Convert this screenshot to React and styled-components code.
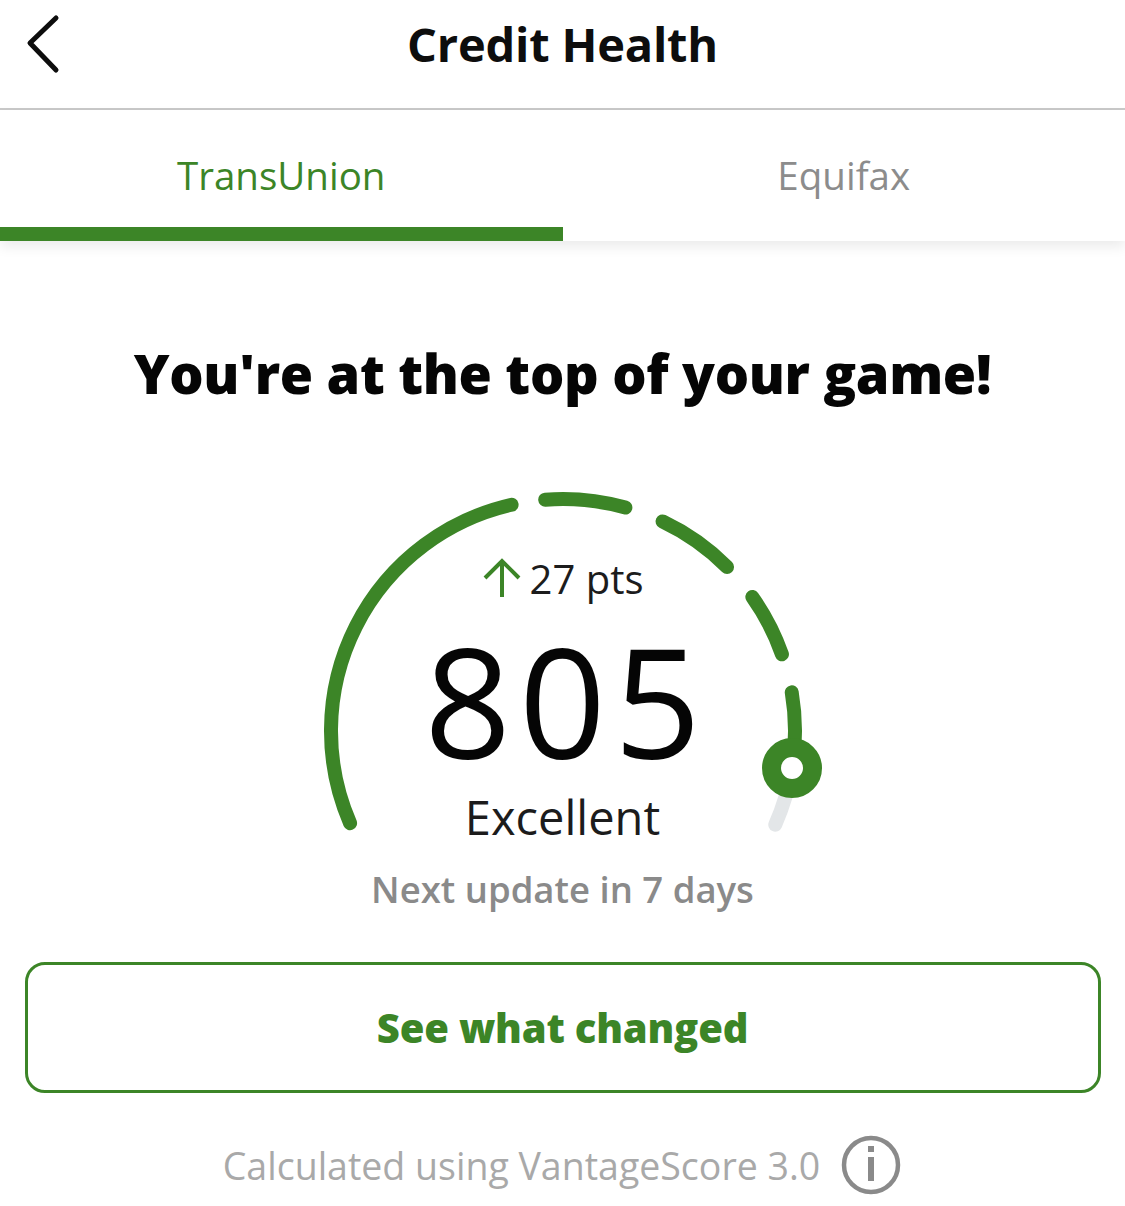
import React from "react";
import styled, { createGlobalStyle } from "styled-components";

const GREEN = "#3c8527";

const Global = createGlobalStyle`
  html, body { margin: 0; padding: 0; background: #ffffff; }
  body { font-family: "Open Sans", "Noto Sans", sans-serif; color: #111; }
  * { box-sizing: border-box; }
`;

const Page = styled.div`
  width: 1125px;
  min-height: 1206px;
  display: flex;
  flex-direction: column;
  background: #fff;
`;

const Header = styled.header`
  position: relative;
  height: 110px;
  border-bottom: 2px solid #c9c9c9;
  display: flex;
  align-items: center;
  justify-content: center;
`;

const BackButton = styled.button`
  position: absolute;
  left: 22px;
  top: 12px;
  width: 44px;
  height: 64px;
  border: 0;
  padding: 0;
  background: transparent;
  display: flex;
  align-items: center;
  justify-content: center;
`;

const Title = styled.h1`
  margin: 0;
  margin-top: -20px;
  font-size: 47px;
  font-weight: 700;
  letter-spacing: -0.2px;
  color: #0d0d0d;
`;

const Tabs = styled.nav`
  display: grid;
  grid-template-columns: 1fr 1fr;
  height: 131px;
  box-shadow: 0 6px 12px rgba(0, 0, 0, 0.08);
  position: relative;
  z-index: 1;
`;

const Tab = styled.div`
  display: flex;
  align-items: center;
  justify-content: center;
  padding-top: 12px;
  font-size: 38.5px;
  color: ${(p) => (p.$active ? GREEN : "#8c8c8c")};
  border-bottom: 14px solid ${(p) => (p.$active ? GREEN : "transparent")};
`;

const Content = styled.main`
  display: flex;
  flex-direction: column;
  align-items: center;
`;

const Heading = styled.h2`
  margin: 92px 0 0;
  height: 80px;
  line-height: 80px;
  font-size: 54px;
  font-weight: 800;
  letter-spacing: -0.3px;
  color: #050505;
`;

const GaugeWrap = styled.div`
  position: relative;
  width: 560px;
  height: 380px;
  margin-top: 63px;
  display: flex;
  flex-direction: column;
  align-items: center;
`;

const GaugeSvg = styled.svg`
  position: absolute;
  left: 0;
  top: 0;
`;

const Change = styled.div`
  position: relative;
  margin-top: 79px;
  height: 46px;
  display: flex;
  align-items: center;
  gap: 8px;
  font-size: 40px;
  color: #1c1c1c;
`;

const Score = styled.div`
  position: relative;
  margin-top: 35px;
  height: 130px;
  line-height: 130px;
  font-size: 152px;
  font-weight: 400;
  letter-spacing: 8px;
  margin-right: -8px;
  color: #050505;
`;

const Rating = styled.div`
  position: relative;
  margin-top: 23px;
  height: 56px;
  line-height: 56px;
  font-size: 47px;
  color: #1c1c1c;
`;

const NextUpdate = styled.div`
  margin-top: 8px;
  height: 50px;
  line-height: 50px;
  font-size: 36.5px;
  font-weight: 600;
  color: #8a8a8a;
`;

const ActionButton = styled.button`
  margin-top: 48px;
  width: 1076px;
  height: 131px;
  border: 3px solid ${GREEN};
  border-radius: 20px;
  background: #fff;
  font-family: "Open Sans", "Noto Sans", sans-serif;
  font-size: 40px;
  font-weight: 800;
  color: ${GREEN};
  letter-spacing: -0.2px;
`;

const Footer = styled.div`
  margin-top: 41px;
  display: flex;
  align-items: center;
  gap: 20px;
  height: 62px;
  font-size: 37.5px;
  font-weight: 400;
  color: #a9a9a9;
`;

const CX = 280;
const CY = 255;
const R = 232;

function pt(a) {
  const rad = (a * Math.PI) / 180;
  return [CX + R * Math.cos(rad), CY + R * Math.sin(rad)];
}

function arc(a1, a2) {
  const [x1, y1] = pt(a1);
  const [x2, y2] = pt(a2);
  const large = a2 - a1 > 180 ? 1 : 0;
  return `M ${x1.toFixed(2)} ${y1.toFixed(2)} A ${R} ${R} 0 ${large} 1 ${x2.toFixed(2)} ${y2.toFixed(2)}`;
}

const segments = [
  [156.6, 257.2],
  [265.6, 285.6],
  [295.4, 315.0],
  [324.7, 340.7],
  [350.4, 369.2],
];

function Gauge() {
  const [kx, ky] = pt(9.2);
  return (
    <GaugeSvg width="560" height="380" viewBox="0 0 560 380">
      <path d={arc(369.2, 383.8)} fill="none" stroke="#e3e6e8" strokeWidth="14" strokeLinecap="round" />
      {segments.map(([a, b], i) => (
        <path key={i} d={arc(a, b)} fill="none" stroke={GREEN} strokeWidth="14" strokeLinecap="round" />
      ))}
      <circle cx={kx} cy={ky} r="20.5" fill="#fff" stroke={GREEN} strokeWidth="19" />
    </GaugeSvg>
  );
}

export default function App() {
  return (
    <Page>
      <Global />
      <Header>
        <BackButton aria-label="Back">
          <svg width="44" height="64" viewBox="0 0 44 64">
            <polyline points="34,6 8,31 34,58" fill="none" stroke="#0d0d0d" strokeWidth="5" strokeLinecap="round" strokeLinejoin="round" />
          </svg>
        </BackButton>
        <Title>Credit Health</Title>
      </Header>
      <Tabs>
        <Tab $active>TransUnion</Tab>
        <Tab>Equifax</Tab>
      </Tabs>
      <Content>
        <Heading>You're at the top of your game!</Heading>
        <GaugeWrap>
          <Gauge />
          <Change>
            <svg width="40" height="42" viewBox="0 0 40 42">
              <path d="M20 40 V4 M3 21 L20 4 L37 21" fill="none" stroke={GREEN} strokeWidth="4" />
            </svg>
            <span>27 pts</span>
          </Change>
          <Score>805</Score>
          <Rating>Excellent</Rating>
        </GaugeWrap>
        <NextUpdate>Next update in 7 days</NextUpdate>
        <ActionButton>See what changed</ActionButton>
        <Footer>
          <span>Calculated using VantageScore 3.0</span>
          <svg width="62" height="62" viewBox="0 0 62 62">
            <circle cx="31" cy="31" r="27" fill="none" stroke="#8a8a8a" strokeWidth="4.5" />
            <rect x="28" y="12" width="6" height="6" fill="#8a8a8a" />
            <rect x="28" y="23" width="6" height="24" fill="#8a8a8a" />
          </svg>
        </Footer>
      </Content>
    </Page>
  );
}
